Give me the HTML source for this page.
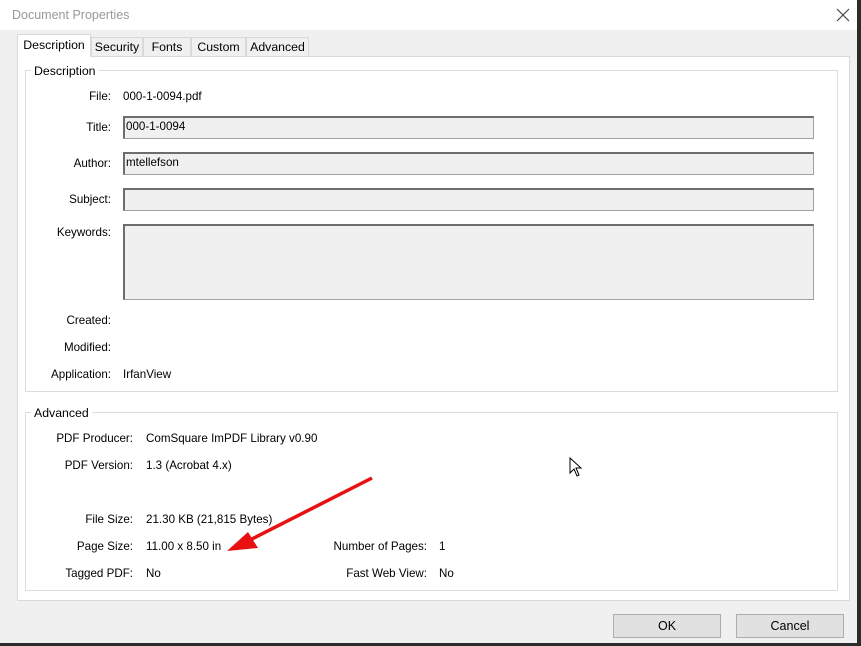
<!DOCTYPE html>
<html><head><style>
body{margin:0;width:861px;height:646px;background:#2b2b2b;font-family:"Liberation Sans",sans-serif;font-size:11.6px;color:#000;position:relative;overflow:hidden}
.a{position:absolute}
.win{left:0;top:0;width:857px;height:643px;background:#f0f0f0}
.title{left:0;top:0;width:857px;height:30px;background:#fff}
.lbl{position:absolute;text-align:right;white-space:nowrap}
.val{position:absolute;white-space:nowrap}
.in{position:absolute;background:#f0f0f0;border:1px solid #a0a0a0;border-top:2px solid #6d6d6d;border-left:2px solid #6d6d6d;box-sizing:border-box;padding:2px 1px}
.grp{position:absolute;border:1px solid #dcdcdc}
.gt{position:absolute;background:#fff;padding:0 3px;font-size:12.3px}
.tab{position:absolute;top:37px;height:19px;border:1px solid #d9d9d9;border-bottom:none;background:#f0f0f0;box-sizing:border-box;padding-top:2px;text-align:center;font-size:12.3px}
.btn{position:absolute;top:614px;width:108px;height:24px;background:#e1e1e1;border:1px solid #adadad;box-sizing:border-box;text-align:center;line-height:22px;font-size:12.5px}
</style></head><body>
<div class="a" style="left:0;top:10px;width:3px;height:12px;background:#1b4f7a"></div>
<div class="a win"></div>
<div class="a title"></div>
<div class="a" style="left:12px;top:8px;color:#999;font-size:12.5px">Document Properties</div>
<svg class="a" style="left:836px;top:8px" width="14" height="14"><path d="M1 1L13 13M13 1L1 13" stroke="#444" stroke-width="1.2"/></svg>
<div class="a" style="left:17px;top:56px;width:833px;height:545px;background:#fff;border:1px solid #d9d9d9;box-sizing:border-box"></div>
<div class="tab" style="left:17px;top:34px;height:23px;width:74px;background:#fff;padding-top:3px;z-index:2">Description</div>
<div class="tab" style="left:91px;width:52px">Security</div>
<div class="tab" style="left:143px;width:48px">Fonts</div>
<div class="tab" style="left:191px;width:55px">Custom</div>
<div class="tab" style="left:246px;width:63px">Advanced</div>

<div class="grp" style="left:25px;top:70px;width:811px;height:320px"></div>
<div class="gt" style="left:31px;top:64px">Description</div>
<div class="lbl" style="right:750px;top:90px">File:</div><div class="val" style="left:123px;top:90px">000-1-0094.pdf</div>
<div class="lbl" style="right:750px;top:121px">Title:</div><div class="in" style="left:123px;top:116px;width:691px;height:23px">000-1-0094</div>
<div class="lbl" style="right:750px;top:157px">Author:</div><div class="in" style="left:123px;top:152px;width:691px;height:23px">mtellefson</div>
<div class="lbl" style="right:750px;top:193px">Subject:</div><div class="in" style="left:123px;top:188px;width:691px;height:23px"></div>
<div class="lbl" style="right:750px;top:226px">Keywords:</div><div class="in" style="left:123px;top:224px;width:691px;height:76px"></div>
<div class="lbl" style="right:750px;top:314px">Created:</div>
<div class="lbl" style="right:750px;top:341px">Modified:</div>
<div class="lbl" style="right:750px;top:368px">Application:</div><div class="val" style="left:123px;top:368px">IrfanView</div>

<div class="grp" style="left:25px;top:412px;width:811px;height:177px"></div>
<div class="gt" style="left:31px;top:406px">Advanced</div>
<div class="lbl" style="right:728px;top:432px">PDF Producer:</div><div class="val" style="left:146px;top:432px">ComSquare ImPDF Library v0.90</div>
<div class="lbl" style="right:728px;top:459px">PDF Version:</div><div class="val" style="left:146px;top:459px">1.3 (Acrobat 4.x)</div>
<div class="lbl" style="right:728px;top:513px">File Size:</div><div class="val" style="left:146px;top:513px">21.30 KB (21,815 Bytes)</div>
<div class="lbl" style="right:728px;top:540px">Page Size:</div><div class="val" style="left:146px;top:540px">11.00 x 8.50 in</div>
<div class="lbl" style="right:728px;top:567px">Tagged PDF:</div><div class="val" style="left:146px;top:567px">No</div>
<div class="lbl" style="right:434px;top:540px">Number of Pages:</div><div class="val" style="left:439px;top:540px">1</div>
<div class="lbl" style="right:434px;top:567px">Fast Web View:</div><div class="val" style="left:439px;top:567px">No</div>

<svg class="a" style="left:220px;top:470px" width="170" height="90"><line x1="152" y1="8" x2="26" y2="72" stroke="#e81010" stroke-width="3.5"/><polygon points="7,81 28,62 38,78" fill="#e81010"/></svg>
<svg class="a" style="left:569px;top:457px" width="14" height="22"><path d="M1 1 L1 16 L5 12 L8 19 L10 18 L7 11 L12 11 Z" fill="#fff" stroke="#000"/></svg>

<div class="btn" style="left:613px">OK</div>
<div class="btn" style="left:736px">Cancel</div>
</body></html>
